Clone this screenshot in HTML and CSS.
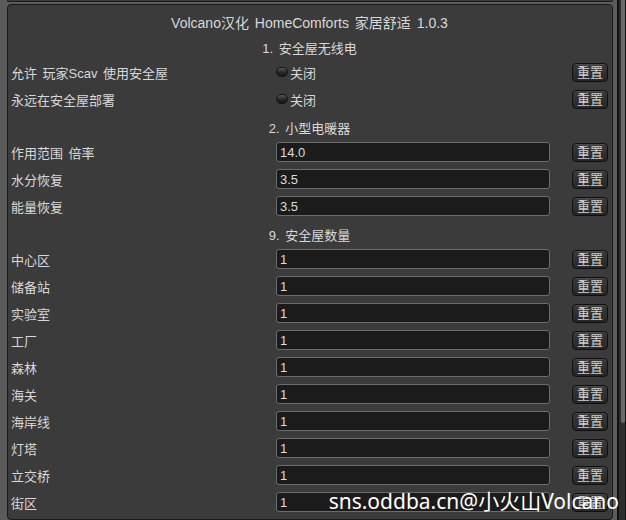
FILE: index.html
```html
<!DOCTYPE html>
<html lang="zh-CN">
<head>
  <meta charset="UTF-8" />
  <title>HomeComforts 家居舒适</title>
  <link rel="stylesheet" href="styles.css">
</head>
<body>
  <div class="window">
    <div class="main">
      <div class="prev-panel"></div>
      <div class="panel">
        <div class="title">Volcano汉化 HomeComforts 家居舒适 1.0.3</div>

        <div class="section">1. 安全屋无线电</div>
        <div class="row">
          <div class="label">允许 玩家Scav 使用安全屋</div>
          <div class="control"><span class="toggle"></span><span>关闭</span></div>
          <button class="reset">重置</button>
        </div>
        <div class="row">
          <div class="label">永远在安全屋部署</div>
          <div class="control"><span class="toggle"></span><span>关闭</span></div>
          <button class="reset">重置</button>
        </div>

        <div class="section">2. 小型电暖器</div>
        <div class="row">
          <div class="label">作用范围 倍率</div>
          <div class="control"><div class="field">14.0</div></div>
          <button class="reset">重置</button>
        </div>
        <div class="row">
          <div class="label">水分恢复</div>
          <div class="control"><div class="field">3.5</div></div>
          <button class="reset">重置</button>
        </div>
        <div class="row">
          <div class="label">能量恢复</div>
          <div class="control"><div class="field">3.5</div></div>
          <button class="reset">重置</button>
        </div>

        <div class="section">9. 安全屋数量</div>
        <div class="row">
          <div class="label">中心区</div>
          <div class="control"><div class="field">1</div></div>
          <button class="reset">重置</button>
        </div>
        <div class="row">
          <div class="label">储备站</div>
          <div class="control"><div class="field">1</div></div>
          <button class="reset">重置</button>
        </div>
        <div class="row">
          <div class="label">实验室</div>
          <div class="control"><div class="field">1</div></div>
          <button class="reset">重置</button>
        </div>
        <div class="row">
          <div class="label">工厂</div>
          <div class="control"><div class="field">1</div></div>
          <button class="reset">重置</button>
        </div>
        <div class="row">
          <div class="label">森林</div>
          <div class="control"><div class="field">1</div></div>
          <button class="reset">重置</button>
        </div>
        <div class="row">
          <div class="label">海关</div>
          <div class="control"><div class="field">1</div></div>
          <button class="reset">重置</button>
        </div>
        <div class="row">
          <div class="label">海岸线</div>
          <div class="control"><div class="field">1</div></div>
          <button class="reset">重置</button>
        </div>
        <div class="row">
          <div class="label">灯塔</div>
          <div class="control"><div class="field">1</div></div>
          <button class="reset">重置</button>
        </div>
        <div class="row">
          <div class="label">立交桥</div>
          <div class="control"><div class="field">1</div></div>
          <button class="reset">重置</button>
        </div>
        <div class="row">
          <div class="label">街区</div>
          <div class="control"><div class="field">1</div></div>
          <button class="reset">重置</button>
        </div>
      </div>
    </div>
    <div class="scrollbar"><div class="thumb"></div></div>
  </div>
  <div class="watermark">sns.oddba.cn@小火山Volcano</div>
</body>
</html>
```

FILE: styles.css
```css
html, body {
  margin: 0;
  padding: 0;
  width: 626px;
  height: 520px;
  overflow: hidden;
  background: #5b5b5b;
  font-family: "Liberation Sans", "Noto Sans CJK SC", sans-serif;
  font-size: 13px;
  color: #d8d8d8;
}

.window { display: flex; height: 520px; }
.main { display: flex; flex-direction: column; width: 606px; margin-left: 7px; }

.prev-panel {
  height: 1px;
  background: #3b3b3b;
  border: 1px solid #1c1c1c;
  border-top: none;
  border-radius: 0 0 4px 4px;
}

.panel {
  margin-top: 2px;
  flex: 1;
  background: #3b3b3b;
  border: 1px solid #1a1a1a;
  border-radius: 4px;
  padding: 3px 4px 0 3px;
  word-spacing: 2px;
}

.title { height: 26px; line-height: 30px; text-align: center; font-size: 14px; }
.section { height: 26px; line-height: 30px; text-align: center; }

.row { display: flex; align-items: center; height: 24px; padding-bottom: 3px; }
.label { width: 265px; white-space: nowrap; }
.control { width: 274px; display: flex; align-items: center; }

.toggle {
  width: 10px;
  height: 8px;
  margin-right: 2px;
  border: 1px solid #121212;
  border-radius: 5px;
  background: linear-gradient(#5a5a5a, #2a2a2a 50%, #161616);
}

.field {
  flex: 1;
  height: 18px;
  line-height: 19px;
  padding-left: 3px;
  background: #1b1b1b;
  border: 1px solid #6c6c6c;
  border-radius: 3px;
  color: #dcdcdc;
  word-spacing: 0;
}

.reset {
  margin-left: 22px;
  width: 36px;
  height: 19px;
  padding: 0;
  font-family: inherit;
  font-size: 13px;
  line-height: 17px;
  color: #cfcfcf;
  background: linear-gradient(#3a3a3a, #262626);
  border: 1px solid #0f0f0f;
  border-radius: 4px;
  box-shadow: inset 0 1px 0 #4a4a4a;
}

.scrollbar {
  width: 9px;
  margin-left: 4px;
  background: #2e2e2e;
  border-left: 2px solid #111;
  border-right: 1px solid #111;
}
.thumb {
  height: 423px;
  margin-left: 2px;
  background: #6a6a6a;
  border-radius: 0 0 3px 3px;
}

.watermark {
  position: absolute;
  right: 7px;
  bottom: 6px;
  font-family: "Noto Sans", "Noto Sans CJK SC", sans-serif;
  font-size: 21px;
  line-height: 26px;
  color: #ffffff;
  white-space: nowrap;
}
```
